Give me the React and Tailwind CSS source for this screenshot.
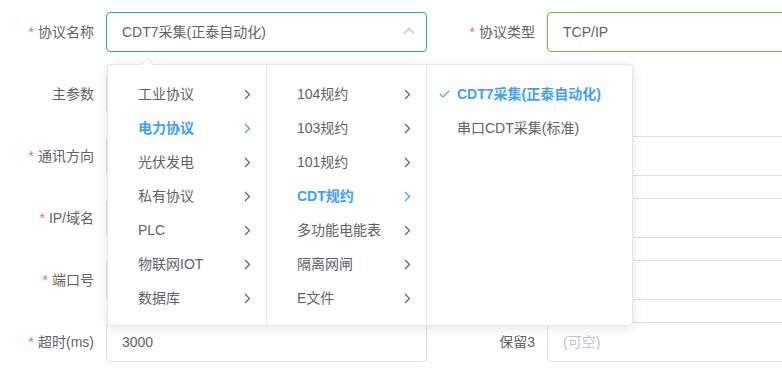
import React from "react";

const font = { fontFamily: '"Liberation Sans", "Noto Sans CJK SC", sans-serif' };

function Label({ text, req }) {
  return (
    <div className="w-[106px] shrink-0 pr-3 text-right text-[14px] text-[#606266] leading-[40px]">
      {req && <span className="text-[#f56c6c] mr-1">*</span>}
      {text}
    </div>
  );
}

function Input({ value, placeholder, border = "border-[#dcdfe6]", chevron }) {
  return (
    <div className={`relative w-[321px] h-[40px] shrink-0 rounded border ${border} bg-white flex items-center px-[15px] text-[14px]`}>
      {value ? <span className="text-[#606266]">{value}</span> : <span className="text-[#c0c4cc]">{placeholder}</span>}
      {chevron && (
        <svg className="absolute right-[11px] top-[14px]" width="12" height="8" viewBox="0 0 12 8" fill="none">
          <path d="M1 6.5 L6 1.5 L11 6.5" stroke="#c0c4cc" strokeWidth="1.3" />
        </svg>
      )}
    </div>
  );
}

function Chevron({ active }) {
  return (
    <svg className="absolute right-[15px] top-[12px]" width="7" height="11" viewBox="0 0 7 11" fill="none">
      <path d="M1 1 L5.5 5.5 L1 10" stroke={active ? "#409eff" : "#606266"} strokeWidth="1.2" />
    </svg>
  );
}

function Item({ text, active, arrow = true, check }) {
  return (
    <div
      className={`relative h-[34px] leading-[34px] pl-[30px] pr-[30px] text-[14px] whitespace-nowrap ${
        active ? "text-[#409eff] font-bold" : "text-[#606266]"
      }`}
    >
      {check && (
        <svg className="absolute left-[12px] top-[13px]" width="11" height="8" viewBox="0 0 11 8" fill="none">
          <path d="M0.8 3.8 L4 7 L10.2 0.8" stroke="#409eff" strokeWidth="1.2" />
        </svg>
      )}
      {text}
      {arrow && <Chevron active={active} />}
    </div>
  );
}

export default function App() {
  const col1 = ["工业协议", "电力协议", "光伏发电", "私有协议", "PLC", "物联网IOT", "数据库"];
  const col2 = ["104规约", "103规约", "101规约", "CDT规约", "多功能电能表", "隔离网闸", "E文件"];
  return (
    <div className="relative w-[782px] h-[375px] overflow-hidden bg-white" style={font}>
      <div className="flex flex-col gap-[22px] pt-[12px]">
        <div className="flex">
          <Label text="协议名称" req />
          <Input value="CDT7采集(正泰自动化)" border="border-[#1ab394]" chevron />
          <div className="w-[14px] shrink-0" />
          <Label text="协议类型" req />
          <Input value="TCP/IP" border="border-[#67c23a]" />
        </div>
        <div className="flex">
          <Label text="主参数" />
          <Input value="" />
        </div>
        <div className="flex">
          <Label text="通讯方向" req />
          <Input value="" />
          <div className="w-[14px] shrink-0" />
          <Label text="" />
          <Input value="" />
        </div>
        <div className="flex">
          <Label text="IP/域名" req />
          <Input value="" />
          <div className="w-[14px] shrink-0" />
          <Label text="" />
          <Input value="" />
        </div>
        <div className="flex">
          <Label text="端口号" req />
          <Input value="" />
          <div className="w-[14px] shrink-0" />
          <Label text="" />
          <Input value="" />
        </div>
        <div className="flex">
          <Label text="超时(ms)" req />
          <Input value="3000" />
          <div className="w-[14px] shrink-0" />
          <Label text="保留3" />
          <Input placeholder="(可空)" />
        </div>
      </div>

      {/* cascader dropdown */}
      <div className="absolute left-[107px] top-[64px] w-[526px] h-[262px] rounded border border-[#e4e7ed] bg-white shadow-[0_2px_12px_0_rgba(0,0,0,0.1)] flex">
        <div className="absolute left-[35px] top-[-5px] w-[9px] h-[9px] rotate-45 bg-white border-l border-t border-[#e4e7ed]" />
        <div className="w-[159px] h-full border-r border-[#e4e7ed] pt-[12px]">
          {col1.map((t) => (
            <Item key={t} text={t} active={t === "电力协议"} />
          ))}
        </div>
        <div className="w-[160px] h-full border-r border-[#e4e7ed] pt-[12px]">
          {col2.map((t) => (
            <Item key={t} text={t} active={t === "CDT规约"} />
          ))}
        </div>
        <div className="flex-1 h-full pt-[12px]">
          <Item text="CDT7采集(正泰自动化)" active check arrow={false} />
          <Item text="串口CDT采集(标准)" arrow={false} />
        </div>
      </div>
    </div>
  );
}
